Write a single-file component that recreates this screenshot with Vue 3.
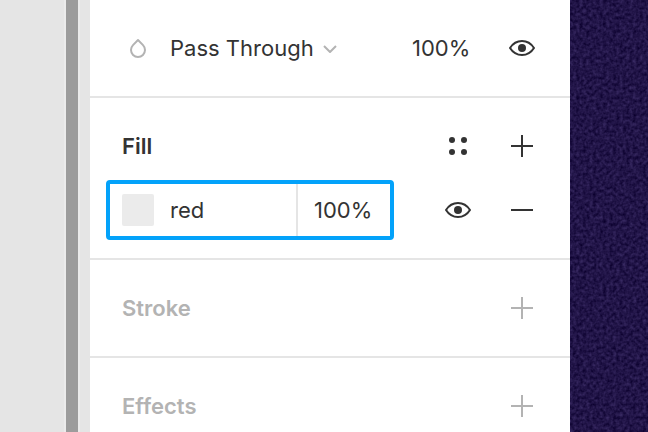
<script setup>
import { ref } from 'vue'

const blend = ref('Pass Through')
const layerOpacity = ref('100%')
const fillName = ref('red')
const fillOpacity = ref('100%')
const emptySections = ['Stroke', 'Effects']
</script>

<template>
  <div class="editor">
    <div class="gutter"></div>
    <div class="scrollbar"></div>
    <div class="edge"></div>

    <main class="panel">
      <section class="section">
        <div class="row">
          <svg class="icon muted" viewBox="0 0 32 32" aria-hidden="true">
            <path d="M16 8L11 13.1A7 7 0 1 0 21 13.1Z" />
          </svg>
          <label class="blend">
            <select v-model="blend" class="field" aria-label="Blend mode">
              <option>Pass Through</option>
              <option>Normal</option>
              <option>Multiply</option>
            </select>
            <svg class="chevron muted" viewBox="0 0 16 16" aria-hidden="true">
              <path d="M2 6l6 6 6-6" />
            </svg>
          </label>
          <input v-model="layerOpacity" class="field opacity" aria-label="Layer opacity" />
          <button class="tool" aria-label="Toggle layer visibility">
            <svg class="icon" viewBox="0 0 32 32">
              <path d="M4 16C7 11.3 11.3 9 16 9s9 2.3 12 7c-3 4.7-7.3 7-12 7S7 20.7 4 16Z" />
              <circle class="solid" cx="16" cy="16" r="4" />
            </svg>
          </button>
        </div>
      </section>

      <section class="section">
        <div class="row">
          <h2 class="title">Fill</h2>
          <button class="tool" aria-label="Fill styles">
            <svg class="icon" viewBox="0 0 32 32">
              <g class="solid">
                <circle cx="10" cy="10" r="3" />
                <circle cx="22" cy="10" r="3" />
                <circle cx="10" cy="22" r="3" />
                <circle cx="22" cy="22" r="3" />
              </g>
            </svg>
          </button>
          <button class="tool" aria-label="Add fill">
            <svg class="icon" viewBox="0 0 32 32"><path d="M5 16H27M16 5V27" /></svg>
          </button>
        </div>
        <div class="row paint-row">
          <div class="paint">
            <button class="swatch" aria-label="Pick fill colour"></button>
            <input v-model="fillName" class="field paint-name" aria-label="Fill colour" />
            <input v-model="fillOpacity" class="field paint-opacity" aria-label="Fill opacity" />
          </div>
          <button class="tool" aria-label="Toggle fill visibility">
            <svg class="icon" viewBox="0 0 32 32">
              <path d="M4 16C7 11.3 11.3 9 16 9s9 2.3 12 7c-3 4.7-7.3 7-12 7S7 20.7 4 16Z" />
              <circle class="solid" cx="16" cy="16" r="4" />
            </svg>
          </button>
          <button class="tool" aria-label="Remove fill">
            <svg class="icon" viewBox="0 0 32 32"><path d="M5 16H27" /></svg>
          </button>
        </div>
      </section>

      <section v-for="name in emptySections" :key="name" class="section">
        <div class="row muted">
          <h2 class="title">{{ name }}</h2>
          <button class="tool" :aria-label="'Add ' + name">
            <svg class="icon" viewBox="0 0 32 32"><path d="M5 16H27M16 5V27" /></svg>
          </button>
        </div>
      </section>
    </main>

    <div class="backdrop">
      <svg class="grain" aria-hidden="true">
        <filter id="grain" x="0" y="0" width="100%" height="100%" color-interpolation-filters="sRGB">
          <feTurbulence type="fractalNoise" baseFrequency="0.3" numOctaves="2" seed="4" />
          <feColorMatrix
            values="0.24 0 0 0 0.01
                    0.22 0 0 0 -0.03
                    0.28 0 0 0 0.14
                    0 0 0 0 1"
          />
        </filter>
        <rect width="100%" height="100%" filter="url(#grain)" />
      </svg>
    </div>
  </div>
</template>

<style>
body {
  margin: 0;
}
</style>

<style scoped>
.editor {
  display: flex;
  height: 100vh;
  overflow: hidden;
  background: #e5e5e5;
  color: #333333;
  font: 400 22px/32px Inter, sans-serif;
}

.gutter {
  flex: 0 0 64px;
}

.scrollbar {
  flex: 0 0 12px;
  border: solid #ebebeb;
  border-width: 0 2px;
  background: #9c9c9c;
}

.edge {
  flex: 0 0 10px;
}

.panel {
  flex: 1;
  min-width: 0;
  background: #ffffff;
}

.section {
  padding: 16px 0;
  border-bottom: 2px solid #e5e5e5;
}

.row {
  display: flex;
  align-items: center;
  height: 64px;
  padding: 0 16px 0 32px;
}

.paint-row {
  padding-left: 16px;
}

.muted {
  color: #b3b3b3;
}

.title {
  flex: 1;
  margin: 0;
  font-size: 22px;
  font-weight: 600;
}

.icon {
  display: block;
  width: 32px;
  height: 32px;
}

.icon,
.chevron {
  flex: none;
  fill: none;
  stroke: currentColor;
  stroke-width: 2;
  stroke-linejoin: round;
}

.solid {
  fill: currentColor;
  stroke: none;
}

.blend {
  display: flex;
  flex: 1;
  align-items: center;
  gap: 8px;
  margin-left: 16px;
}

.chevron {
  width: 16px;
  height: 16px;
}

.field {
  box-sizing: border-box;
  min-width: 0;
  margin: 0;
  padding: 0;
  border: 0;
  outline: 0;
  border-radius: 0;
  appearance: none;
  background: transparent;
  color: inherit;
  font: inherit;
}

.opacity {
  width: 78px;
}

.tool {
  display: flex;
  flex: 0 0 64px;
  align-items: center;
  justify-content: center;
  height: 64px;
  padding: 0;
  border: 0;
  background: none;
  color: inherit;
}

.paint {
  display: flex;
  flex: 1;
  align-items: center;
  box-sizing: border-box;
  height: 60px;
  min-width: 0;
  margin-right: 32px;
  padding-left: 12px;
  border: 4px solid #03a2fa;
  border-radius: 4px;
}

.swatch {
  flex: 0 0 32px;
  height: 32px;
  padding: 0;
  border: 0;
  border-radius: 2px;
  background: #ebebeb;
}

.paint-name {
  flex: 1;
  margin-left: 16px;
}

.paint-opacity {
  align-self: stretch;
  width: 94px;
  padding-left: 16px;
  border-left: 2px solid #e5e5e5;
}

.backdrop {
  flex: 0 0 78px;
  background: #1f1347;
}

.grain {
  display: block;
  width: 100%;
  height: 100%;
}
</style>
